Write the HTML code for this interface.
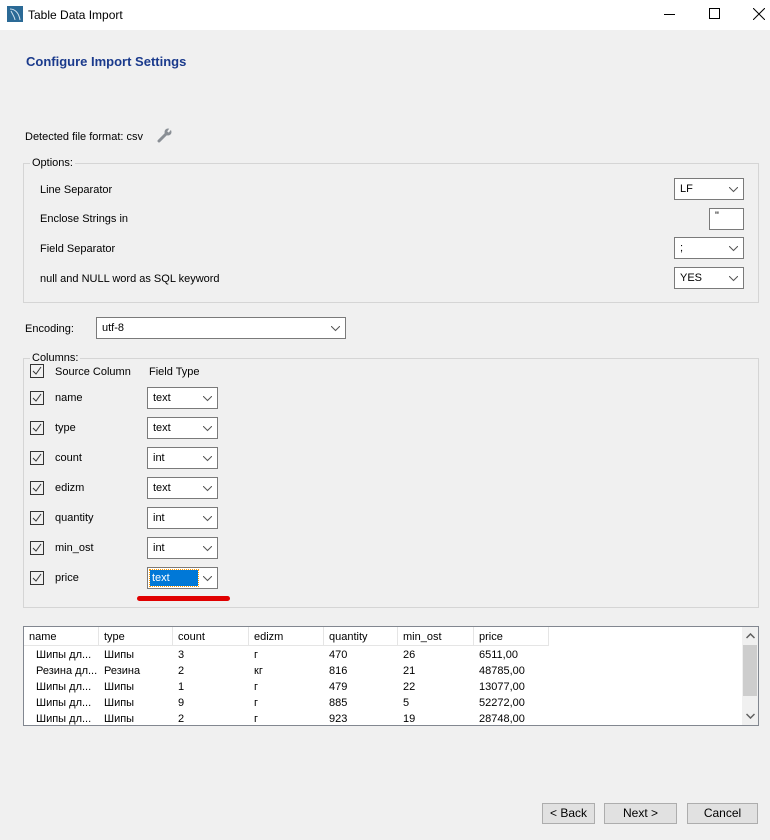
<!DOCTYPE html>
<html><head><meta charset="utf-8">
<style>
*{margin:0;padding:0;box-sizing:border-box}
body{width:770px;height:840px;background:#f0f0f0;font-family:"Liberation Sans",sans-serif;font-size:11px;color:#000;position:relative;overflow:hidden}
.a{position:absolute;white-space:nowrap}
.title{left:0;top:0;width:770px;height:30px;background:#fff}
.box{position:absolute;border:1px solid #d5d5d5}
.lg{position:absolute;background:#f0f0f0;padding:0 2px;top:-7px;left:6px}
.sel{position:absolute;background:#fff;border:1px solid #7a7a7a;height:22px;line-height:20px;padding-left:5px}
.sel svg{position:absolute;right:5px;top:8px}
.cb{position:absolute;width:14px;height:14px;border:1px solid #333;background:#f0f0f0}
.cb svg{position:absolute;left:1px;top:1px}
.btn{position:absolute;background:#e1e1e1;border:1px solid #adadad;height:21px;line-height:19px;text-align:center;font-size:12px}
.tbl .c{position:absolute;white-space:nowrap}
</style></head><body>
<div class="a title"></div>
<svg class="a" style="left:7px;top:6px" width="16" height="16"><rect width="16" height="16" fill="#2b6a96"/><path d="M3 3 C8 3 12 7 13 14 M4 5 C6 9 8 12 8 14" stroke="#cfe0ee" stroke-width="1" fill="none"/></svg>
<div class="a" style="left:28px;top:8px;font-size:12px">Table Data Import</div>
<div class="a" style="left:664px;top:14px;width:11px;height:1px;background:#000"></div>
<div class="a" style="left:709px;top:8px;width:11px;height:11px;border:1px solid #000"></div>
<svg class="a" style="left:753px;top:8px" width="12" height="12"><path d="M0 0L12 12M12 0L0 12" stroke="#000" stroke-width="1"/></svg>

<div class="a" style="left:26px;top:54px;font-size:13px;font-weight:bold;color:#1a3a8c">Configure Import Settings</div>

<div class="a" style="left:25px;top:131px">Detected file format: csv</div>
<svg class="a" style="left:157px;top:127px" width="16" height="16"><path d="M2 14 L9 7" stroke="#8a8f95" stroke-width="3" stroke-linecap="round"/><circle cx="11" cy="5" r="3.5" fill="#8a8f95"/><path d="M11 5 L14 1" stroke="#f0f0f0" stroke-width="2"/></svg>

<div class="box" style="left:23px;top:163px;width:736px;height:140px"><div class="lg">Options:</div></div>
<div class="a" style="left:40px;top:184px">Line Separator</div>
<div class="a" style="left:40px;top:213px">Enclose Strings in</div>
<div class="a" style="left:40px;top:243px">Field Separator</div>
<div class="a" style="left:40px;top:273px">null and NULL word as SQL keyword</div>
<div class="sel" style="left:674px;top:178px;width:70px">LF<svg width="9" height="6"><path d="M0 0L4.5 4.5L9 0" stroke="#555" fill="none"/></svg></div>
<div class="sel" style="left:709px;top:208px;width:35px;line-height:14px">"</div>
<div class="sel" style="left:674px;top:237px;width:70px">;<svg width="9" height="6"><path d="M0 0L4.5 4.5L9 0" stroke="#555" fill="none"/></svg></div>
<div class="sel" style="left:674px;top:267px;width:70px">YES<svg width="9" height="6"><path d="M0 0L4.5 4.5L9 0" stroke="#555" fill="none"/></svg></div>

<div class="a" style="left:25px;top:323px">Encoding:</div>
<div class="sel" style="left:96px;top:317px;width:250px">utf-8<svg width="9" height="6"><path d="M0 0L4.5 4.5L9 0" stroke="#555" fill="none"/></svg></div>

<div class="box" style="left:23px;top:358px;width:736px;height:250px"><div class="lg">Columns:</div></div>
<div class="cb" style="left:30px;top:364px"><svg width="10" height="10"><path d="M1 5L4 8L9 1" stroke="#333" fill="none"/></svg></div>
<div class="a" style="left:55px;top:366px">Source Column</div>
<div class="a" style="left:149px;top:366px">Field Type</div>

<div class="cb" style="left:30px;top:391px"><svg width="10" height="10"><path d="M1 5L4 8L9 1" stroke="#333" fill="none"/></svg></div>
<div class="a" style="left:55px;top:392px">name</div>
<div class="sel" style="left:147px;top:387px;width:71px">text<svg width="9" height="6"><path d="M0 0L4.5 4.5L9 0" stroke="#555" fill="none"/></svg></div>

<div class="cb" style="left:30px;top:421px"><svg width="10" height="10"><path d="M1 5L4 8L9 1" stroke="#333" fill="none"/></svg></div>
<div class="a" style="left:55px;top:422px">type</div>
<div class="sel" style="left:147px;top:417px;width:71px">text<svg width="9" height="6"><path d="M0 0L4.5 4.5L9 0" stroke="#555" fill="none"/></svg></div>

<div class="cb" style="left:30px;top:451px"><svg width="10" height="10"><path d="M1 5L4 8L9 1" stroke="#333" fill="none"/></svg></div>
<div class="a" style="left:55px;top:452px">count</div>
<div class="sel" style="left:147px;top:447px;width:71px">int<svg width="9" height="6"><path d="M0 0L4.5 4.5L9 0" stroke="#555" fill="none"/></svg></div>

<div class="cb" style="left:30px;top:481px"><svg width="10" height="10"><path d="M1 5L4 8L9 1" stroke="#333" fill="none"/></svg></div>
<div class="a" style="left:55px;top:482px">edizm</div>
<div class="sel" style="left:147px;top:477px;width:71px">text<svg width="9" height="6"><path d="M0 0L4.5 4.5L9 0" stroke="#555" fill="none"/></svg></div>

<div class="cb" style="left:30px;top:511px"><svg width="10" height="10"><path d="M1 5L4 8L9 1" stroke="#333" fill="none"/></svg></div>
<div class="a" style="left:55px;top:512px">quantity</div>
<div class="sel" style="left:147px;top:507px;width:71px">int<svg width="9" height="6"><path d="M0 0L4.5 4.5L9 0" stroke="#555" fill="none"/></svg></div>

<div class="cb" style="left:30px;top:541px"><svg width="10" height="10"><path d="M1 5L4 8L9 1" stroke="#333" fill="none"/></svg></div>
<div class="a" style="left:55px;top:542px">min_ost</div>
<div class="sel" style="left:147px;top:537px;width:71px">int<svg width="9" height="6"><path d="M0 0L4.5 4.5L9 0" stroke="#555" fill="none"/></svg></div>

<div class="cb" style="left:30px;top:571px"><svg width="10" height="10"><path d="M1 5L4 8L9 1" stroke="#333" fill="none"/></svg></div>
<div class="a" style="left:55px;top:572px">price</div>
<div class="sel" style="left:147px;top:567px;width:71px;padding-left:2px"><div style="position:absolute;left:2px;top:2px;width:48px;height:16px;background:#0078d7;color:#fff;line-height:16px;padding-left:2px;outline:1px dotted #f90">text</div><svg width="9" height="6"><path d="M0 0L4.5 4.5L9 0" stroke="#555" fill="none"/></svg></div>
<div class="a" style="left:137px;top:596px;width:93px;height:5px;background:#e00000;border-radius:3px"></div>

<div class="a tbl" style="left:23px;top:626px;width:736px;height:100px;background:#fff;border:1px solid #828790">
<div class="c" style="left:0;top:0;width:525px;height:19px;border-bottom:1px solid #e5e5e5"></div>
<div class="c" style="left:74px;top:0;width:1px;height:19px;background:#e5e5e5"></div>
<div class="c" style="left:148px;top:0;width:1px;height:19px;background:#e5e5e5"></div>
<div class="c" style="left:224px;top:0;width:1px;height:19px;background:#e5e5e5"></div>
<div class="c" style="left:299px;top:0;width:1px;height:19px;background:#e5e5e5"></div>
<div class="c" style="left:373px;top:0;width:1px;height:19px;background:#e5e5e5"></div>
<div class="c" style="left:449px;top:0;width:1px;height:19px;background:#e5e5e5"></div>
<div class="c" style="left:524px;top:0;width:1px;height:19px;background:#e5e5e5"></div>
<div class="c" style="left:5px;top:4px">name</div><div class="c" style="left:80px;top:4px">type</div><div class="c" style="left:154px;top:4px">count</div><div class="c" style="left:230px;top:4px">edizm</div><div class="c" style="left:305px;top:4px">quantity</div><div class="c" style="left:379px;top:4px">min_ost</div><div class="c" style="left:455px;top:4px">price</div>
<div class="c" style="left:12px;top:22px">Шипы дл...</div><div class="c" style="left:80px;top:22px">Шипы</div><div class="c" style="left:154px;top:22px">3</div><div class="c" style="left:230px;top:22px">г</div><div class="c" style="left:305px;top:22px">470</div><div class="c" style="left:379px;top:22px">26</div><div class="c" style="left:455px;top:22px">6511,00</div>
<div class="c" style="left:12px;top:38px">Резина дл...</div><div class="c" style="left:80px;top:38px">Резина</div><div class="c" style="left:154px;top:38px">2</div><div class="c" style="left:230px;top:38px">кг</div><div class="c" style="left:305px;top:38px">816</div><div class="c" style="left:379px;top:38px">21</div><div class="c" style="left:455px;top:38px">48785,00</div>
<div class="c" style="left:12px;top:54px">Шипы дл...</div><div class="c" style="left:80px;top:54px">Шипы</div><div class="c" style="left:154px;top:54px">1</div><div class="c" style="left:230px;top:54px">г</div><div class="c" style="left:305px;top:54px">479</div><div class="c" style="left:379px;top:54px">22</div><div class="c" style="left:455px;top:54px">13077,00</div>
<div class="c" style="left:12px;top:70px">Шипы дл...</div><div class="c" style="left:80px;top:70px">Шипы</div><div class="c" style="left:154px;top:70px">9</div><div class="c" style="left:230px;top:70px">г</div><div class="c" style="left:305px;top:70px">885</div><div class="c" style="left:379px;top:70px">5</div><div class="c" style="left:455px;top:70px">52272,00</div>
<div class="c" style="left:12px;top:86px">Шипы дл...</div><div class="c" style="left:80px;top:86px">Шипы</div><div class="c" style="left:154px;top:86px">2</div><div class="c" style="left:230px;top:86px">г</div><div class="c" style="left:305px;top:86px">923</div><div class="c" style="left:379px;top:86px">19</div><div class="c" style="left:455px;top:86px">28748,00</div>
<div class="c" style="left:718px;top:0;width:16px;height:98px;background:#f0f0f0"></div>
<div class="c" style="left:719px;top:18px;width:14px;height:51px;background:#cdcdcd"></div>
<svg class="c" style="left:722px;top:6px" width="9" height="6"><path d="M0.5 5L4.5 1L8.5 5" stroke="#606060" stroke-width="1.5" fill="none"/></svg>
<svg class="c" style="left:722px;top:86px" width="9" height="6"><path d="M0.5 1L4.5 5L8.5 1" stroke="#606060" stroke-width="1.5" fill="none"/></svg>
</div>

<div class="btn" style="left:542px;top:803px;width:53px">&lt; Back</div>
<div class="btn" style="left:604px;top:803px;width:73px">Next &gt;</div>
<div class="btn" style="left:687px;top:803px;width:71px">Cancel</div>
</body></html>
